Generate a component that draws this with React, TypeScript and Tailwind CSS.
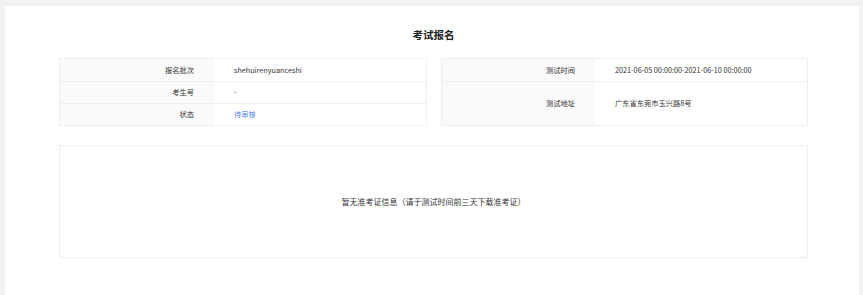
const leftRows = [
  { label: "报名批次", value: "shehuirenyuanceshi" },
  { label: "考生号", value: "-" },
  { label: "状态", value: "待审核", link: true },
];

export default function App() {
  return (
    <div
      className="min-h-[295px] bg-[#f2f2f0] pt-[6px] pl-[5px] pr-[4px] text-[#333]"
      style={{ fontFamily: '"Noto Sans CJK SC", "Noto Sans", sans-serif' }}
    >
      <div className="h-[289px] bg-white pl-[54px] pr-[51px]">
        <h1 className="pt-[20px] pb-[14px] text-center text-[10.5px] font-bold leading-[18px] text-[#222]">
          考试报名
        </h1>
        <div className="flex gap-[14px]">
          <div className="w-[368px] shrink-0 border border-[#eeeeee] text-[7.25px]">
            {leftRows.map((r, i) => (
              <div
                key={r.label}
                className={`flex h-[22px] ${i > 0 ? "border-t border-[#eeeeee]" : ""}`}
              >
                <div className="flex w-[154px] items-center justify-end bg-[#fafafa] pr-[20px]">
                  {r.label}
                </div>
                <div
                  className={`flex flex-1 items-center pl-[20px] ${r.link ? "text-[#4b7ff2]" : ""}`}
                >
                  {r.value}
                </div>
              </div>
            ))}
          </div>
          <div className="w-[367px] shrink-0 border border-[#eeeeee] text-[7.25px]">
            <div className="flex h-[22px]">
              <div className="flex w-[153px] items-center justify-end bg-[#fafafa] pr-[20px]">
                测试时间
              </div>
              <div className="flex flex-1 items-center pl-[20px]">
                2021-06-05 00:00:00-2021-06-10 00:00:00
              </div>
            </div>
            <div className="flex h-[44px] border-t border-[#eeeeee]">
              <div className="flex w-[153px] items-center justify-end bg-[#fafafa] pr-[20px]">
                测试地址
              </div>
              <div className="flex flex-1 items-center pl-[20px]">
                广东省东莞市玉兴路8号
              </div>
            </div>
          </div>
        </div>
        <div className="mt-[19px] flex h-[113px] items-center justify-center border border-[#eeeeee] text-[8px]">
          暂无准考证信息（请于测试时间前三天下载准考证）
        </div>
      </div>
    </div>
  );
}
